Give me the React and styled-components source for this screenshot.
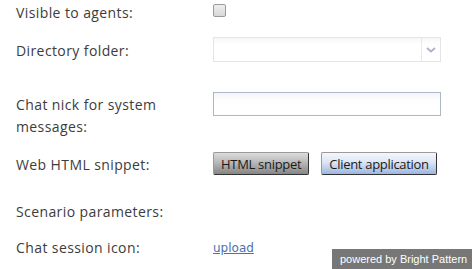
import styled, { createGlobalStyle } from 'styled-components'

const Global = createGlobalStyle`
  html, body {
    margin: 0;
    padding: 0;
    background: #fff;
  }
  body {
    font-family: "Open Sans", "Liberation Sans", sans-serif;
    color: #333;
  }
`

const Page = styled.div`
  position: relative;
  width: 472px;
  height: 269px;
  overflow: hidden;
  padding-left: 16px;
  box-sizing: border-box;
`

const Row = styled.div`
  display: flex;
  align-items: flex-start;
  margin-top: ${({ $top }) => $top}px;
`

const Label = styled.div`
  width: 197px;
  flex-shrink: 0;
  font-size: 14px;
  letter-spacing: 0.4px;
  line-height: 22px;
  padding-top: ${({ $pad }) => $pad || 0}px;
  color: #3c3c3c;
`

const Check = styled.span`
  display: block;
  width: 11px;
  height: 11px;
  margin-top: 2px;
  border: 1px solid #9a9a9a;
  border-radius: 2px;
  background: linear-gradient(#eee, #d8d8d8);
`

const Select = styled.div`
  display: flex;
  width: 228px;
  height: 25px;
  box-sizing: border-box;
  border: 1px solid #e2e4e8;
  background: linear-gradient(#f6f7f9, #fff 30%);
`

const SelectValue = styled.div`
  flex: 1;
`

const SelectArrow = styled.div`
  width: 18px;
  border-left: 1px solid #e6e8ec;
  display: flex;
  align-items: center;
  justify-content: center;
`

const Input = styled.div`
  width: 228px;
  height: 24px;
  box-sizing: border-box;
  border: 1px solid #aeb7c8;
  background: linear-gradient(#f4f5f7, #fff 40%);
`

const Buttons = styled.div`
  display: flex;
  gap: 12px;
`

const Btn = styled.div`
  height: 23px;
  box-sizing: border-box;
  padding: 0 7px;
  display: flex;
  align-items: center;
  font-family: "Open Sans", sans-serif;
  font-size: 13px;
  letter-spacing: -0.3px;
  color: #1a1a1a;
  border: 1px solid #9a9a9a;
  border-right-color: #333;
  border-bottom-color: #333;
  border-radius: 2px;
  background: ${({ $blue }) =>
    $blue
      ? 'linear-gradient(#f4f7fc, #dbe5f4 45%, #9cb6e0)'
      : 'linear-gradient(#dcdcdc, #b4b4b4 50%, #858585)'};
`

const Upload = styled.a`
  font-family: "DejaVu Sans", Verdana, sans-serif;
  font-size: 12px;
  line-height: 22px;
  color: #4a72b0;
  text-decoration: underline;
`

const Powered = styled.div`
  position: absolute;
  right: 0;
  bottom: 0;
  width: 140px;
  height: 20px;
  background: #777;
  color: #fff;
  font-family: "Liberation Sans", Arial, sans-serif;
  font-size: 11px;
  line-height: 20px;
  white-space: nowrap;
  box-sizing: border-box;
  padding-left: 8px;
`

export default function App() {
  return (
    <>
      <Global />
      <Page>
        <Row $top={2}>
          <Label>Visible to agents:</Label>
          <Check />
        </Row>
        <Row $top={13}>
          <Label $pad={3}>Directory folder:</Label>
          <Select>
            <SelectValue />
            <SelectArrow>
              <svg width="10" height="6" viewBox="0 0 10 6">
                <path d="M1 1l4 3.5L9 1" fill="none" stroke="#aab4c8" strokeWidth="1.8" />
              </svg>
            </SelectArrow>
          </Select>
        </Row>
        <Row $top={30}>
          <Label $pad={2}>Chat nick for system<br />messages:</Label>
          <Input />
        </Row>
        <Row $top={14}>
          <Label $pad={2}>Web HTML snippet:</Label>
          <Buttons>
            <Btn>HTML snippet</Btn>
            <Btn $blue>Client application</Btn>
          </Buttons>
        </Row>
        <Row $top={25}>
          <Label>Scenario parameters:</Label>
        </Row>
        <Row $top={14}>
          <Label>Chat session icon:</Label>
          <Upload href="#">upload</Upload>
        </Row>
        <Powered>powered by Bright Pattern</Powered>
      </Page>
    </>
  )
}
